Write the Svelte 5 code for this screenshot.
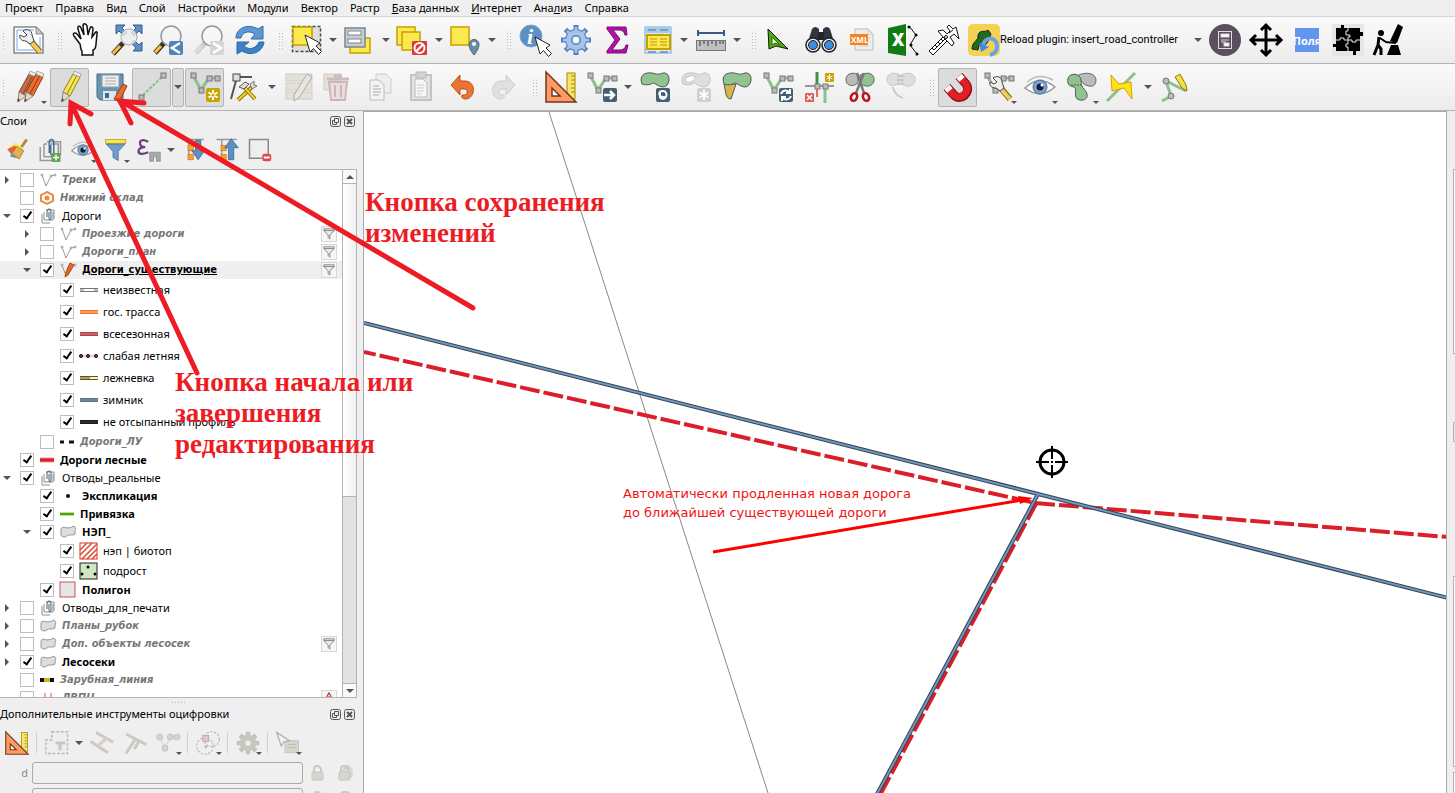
<script lang="ts">
  type Tool = { id: string; label: string; arrow?: boolean; corner?: boolean; on?: boolean; off?: boolean; split?: boolean; text?: string };
  type Row = {
    level: number; kind: string; name: string; open?: boolean; group?: boolean;
    checked?: boolean; look?: string; filter?: boolean; warn?: boolean; active?: boolean;
  };

  const menu = [
    ['', '', 'Проект'], ['', '', 'Правка'], ['', '', 'Вид'], ['', '', 'Слой'],
    ['', '', 'Настройки'], ['', '', 'Модули'], ['', '', 'Вектор'], ['', '', 'Растр'],
    ['', 'Б', 'аза данных'], ['', 'И', 'нтернет'], ['Ана', 'л', 'из'], ['', '', 'Справка'],
  ];

  // shared pieces
  const node = (x: number, y: number) => `<rect x="${x - 2}" y="${y - 2}" width="5" height="5" fill="#bbb" stroke="#777"/>`;
  const vline = `<path d="M4 4L12 19L20 7H28" fill="none" stroke="#8cc08f" stroke-width="3"/>${node(4, 4)}${node(12, 19)}${node(20, 7)}${node(28, 7)}`;
  const badge = (fill: string, inner: string) => `<rect x="17" y="17" width="14" height="14" rx="2" fill="${fill}"/>${inner}`;
  const star = `<path d="M24 19v10M19.500 21.500l9 5M28.500 21.500l-9 5" stroke="#fff" stroke-width="2"/><circle cx="24" cy="24" r="1.500" fill="#c8a400"/>`;
  const cursor = (x: number, y: number) => `<path d="M${x} ${y}l5 17l3.500-3.500l5 6l3-3l-5.500-5.500l4-3z" fill="#fff" stroke="#222"/>`;
  const lens = (fill: string, line: string, h: string) => `<path d="M12 19L3 29" stroke="${line}" stroke-width="5"/><path d="M9 22L3 28.500" stroke="${h}" stroke-width="3"/><circle cx="19" cy="12" r="10" fill="${fill}" stroke="#999" stroke-width="1.500"/>`;
  const pencil = (x: number, fill: string, dark: string) => `<g transform="translate(${x} 0)"><path d="M13 3l7 3L10 25l-7-4z" fill="${fill}" stroke="${dark}"/><path d="M16.500 5L7 23" stroke="${dark}"/><path d="M3 21l7 4l-8 6z" fill="#e6d8bd" stroke="#888"/><path d="M2 27l2 2l-3 2z" fill="#444"/><path d="M13 3l1-3l7 3l-1 3z" fill="#eee" stroke="#aaa"/></g>`;
  const rulerSet = `<rect x="22" y="2" width="8" height="26" fill="#f5e56b" stroke="#a68a00"/><path d="M26 5h4M26 9h4M26 13h4M26 17h4M26 21h4" stroke="#a68a00"/><path d="M1 1V31H31z" fill="#ff9a63" stroke="#6b3a22" stroke-width="1.500"/><path d="M7 17V25H15z" fill="#fff" stroke="#6b3a22" stroke-width="1.500"/>`;
  const blob = `M3 13C0 5 5 1 13 2C18 3 19 4 24 2C30 1 32 9 28 14C25 18 19 15 15 12C11 13 9 15 3 13z`;
  const sq = (x: number, y: number, w: number, h: number) => `<rect x="${x}" y="${y}" width="${w}" height="${h}" fill="#fce94f" stroke="#c4a000" stroke-width="1.500"/>`;
  const eye = `<path d="M1 17Q15 3 31 16Q16 29 1 17z" fill="#fff" stroke="#999" stroke-width="1.500"/><path d="M3 11Q15 1 29 9" fill="none" stroke="#bbb" stroke-width="1.500"/><circle cx="16" cy="16" r="7" fill="#7ba3d0" stroke="#456a99"/><circle cx="16" cy="16" r="3.500" fill="#17202c"/><circle cx="18" cy="14" r="1.500" fill="#fff"/>`;
  const tree = `<path d="M2 2h27M9 2v25M9 14h5M9 26h5" fill="none" stroke="#999" stroke-width="2"/><rect x="8" y="10" width="7" height="7" fill="#f7a334" stroke="#d07c10"/><rect x="8" y="22" width="7" height="7" fill="#f7a334" stroke="#d07c10"/>`;
  const wrench = `<path d="M16 15L27 28" stroke="#8b6d1c" stroke-width="6"/><path d="M18 18L27 28" stroke="#edcf66" stroke-width="4"/><path d="M10 7C14 4 19 6 19 11L21 17L17 20L13 17C8 17 6 14 7 11L11 13L14 11z" fill="#eee" stroke="#444"/>`;
  const clip = (c: string) => `<path d="M3 12v18h17M8 8v17h19V8H17M12 8H8" fill="none" stroke="${c}" stroke-width="2"/><path d="M12 5h18v17h-3" fill="none" stroke="${c}" stroke-width="2"/><path d="M15 20V6q0-4 3-4t3 4v14q0 3-2 3t-2-3V9" fill="none" stroke="#47708f" stroke-width="2"/>`;

  const icons: Record<string, string> = {
    layout: `<path d="M1 3H23L30 10V29H1z" fill="#fff" stroke="#888" stroke-width="1.500"/><path d="M23 3v7h7z" fill="#ccc" stroke="#888"/><path d="M4 6H21M4 6V26H27V13" fill="none" stroke="#a9c4ef" stroke-width="1.500"/>${wrench}`,
    pan: `<path d="M10 20L4 12C2 9 5 8 7 10L11 15L8 5C7 2 10 1 11 4L14 11L13 2C13-1 16-1 17 2L18 11L20 4C21 2 23 3 23 5L22 13L25 9C26 7 28 8 27 10L26 20Q26 25 23 26V31H12V27C10 25 11 23 10 20z" fill="#fff" stroke="#111" stroke-width="1.500"/>`,
    zoomFull: `<path d="M12 19L2 30" stroke="#333" stroke-width="5"/><path d="M9 22L2 29.500" stroke="#fbc02d" stroke-width="3"/><g fill="#5f90c4" stroke="#2f5f94"><path d="M5 1h9l-3 3l5 5l-3 3l-5-5l-3 3z"/><path d="M31 1h-9l3 3l-5 5l3 3l5-5l3 3z"/><path d="M31 27h-9l3-3l-5-5l3-3l5 5l3-3z"/></g><circle cx="18" cy="13" r="8" fill="#eee" fill-opacity="0.800" stroke="#aaa"/>`,
    zoomLast: lens('#f5f5f5', '#333', '#fbc02d') + badge('#4f82b7', '<path d="M28 19L20 24L28 29" fill="none" stroke="#fff" stroke-width="2.500"/>'),
    zoomNext: lens('#f7f7f7', '#ccc', '#ddd') + badge('#d2d6d8', '<path d="M20 19L28 24L20 29" fill="none" stroke="#fff" stroke-width="2.500"/>'),
    refresh: `<path d="M2 14C2 4 14-1 24 5L29 2V15H17L21 10C15 6 8 8 7 14z" fill="#5c97d6" stroke="#2e69a8"/><path d="M30 18C29 28 17 33 8 27L3 30V18H15L10 22C16 27 22 24 25 18z" fill="#3f7fc4" stroke="#2e69a8"/>`,
    select: `<rect x="1.500" y="2.500" width="28" height="25" fill="#dedede" stroke="#444" stroke-width="1.500" stroke-dasharray="3 2"/>${sq(2, 3, 19, 18)}${cursor(14, 11)}`,
    selectForm: `${sq(6, 14, 20, 15)}<rect x="1" y="4" width="20" height="19" fill="#c9ced4" stroke="#7c858f" stroke-width="1.500"/><rect x="4" y="7" width="13" height="4" fill="#fff" stroke="#7c858f"/><rect x="4" y="15" width="13" height="4" fill="#fff" stroke="#7c858f"/>`,
    deselect: `${sq(0, 3, 18, 18)}${sq(5, 8, 18, 18)}<rect x="15" y="17" width="15" height="14" rx="1" fill="#dd3b3b"/><circle cx="22.500" cy="24" r="5" fill="none" stroke="#fff" stroke-width="2"/><path d="M19 27.500L26 20.500" stroke="#fff" stroke-width="2"/>`,
    selectLoc: `${sq(1, 3, 18, 18)}<path d="M24 31C20 26 19 23 19 20.500a5 5 0 0 1 10 0C29 23 28 26 24 31z" fill="#6d8ca3" stroke="#48657a"/><circle cx="24" cy="20" r="2" fill="#fff"/>`,
    identify: `<circle cx="12" cy="12" r="11" fill="#5f90c4" stroke="#7ba6d6"/><text x="8" y="20" font-family="Liberation Serif, serif" font-size="22" font-style="italic" font-weight="700" fill="#fff">i</text>${cursor(16, 13)}`,
    gear: `<g fill="none" stroke="#4f84c4"><path d="M16 1V31M1 16H31M5.500 5.500L26.500 26.500M26.500 5.500L5.500 26.500" stroke-width="5"/><circle cx="16" cy="16" r="8" stroke-width="6"/></g><g fill="none" stroke="#a5c4e8"><path d="M16 3V10M16 22V29M3 16H10M22 16H29M7 7L12 12M20 20L25 25M25 7L20 12M12 20L7 25" stroke-width="2.500"/><circle cx="16" cy="16" r="7.500" stroke-width="5"/></g><circle cx="16" cy="16" r="4" fill="#fff" stroke="#4f84c4"/>`,
    sigma: `<path d="M6 3H25L26 11H24Q23 6 18 6H12L19 15L11 26H19Q24 26 25 21H27L25 29H6V27L14 16L6 5z" fill="#b012a8" stroke="#7d0a78"/>`,
    table: `<rect x="3" y="3" width="26" height="26" fill="#ddebf7" stroke="#7aa5cf"/><rect x="3" y="3" width="26" height="6" fill="#a7cbe8"/><path d="M6 6h8M18 6h8M6 28h8M18 28h8" stroke="#5f90c4" stroke-width="1.500"/><rect x="5" y="11" width="23" height="14" fill="#fce94f" stroke="#c4a000" stroke-width="2"/><path d="M8 15h7M18 15h7M8 18h7M18 18h7M8 21h7M18 21h7" stroke="#b99700"/>`,
    measure: `<path d="M3 9H29M3 6V12M29 6V12" stroke="#3c5a80" stroke-width="2"/><rect x="1.500" y="16.500" width="29" height="10" fill="#bfc0c2" stroke="#777"/><path d="M5 17v5M9 17v3M13 17v5M17 17v3M21 17v5M25 17v3M28 17v3" stroke="#666" stroke-width="1.500"/>`,
    greenArrow: `<path d="M4 5L24 25L12 22L5 25z" fill="#4fae0c" stroke="#111"/><path d="M8 13L16 21L11 19L8 21z" fill="#f4f4f4" stroke="#2c6b05"/>`,
    binoculars: `<path d="M7 5Q10 1 14 5V24H1z" fill="#333440"/><path d="M25 5Q22 1 18 5V24H31z" fill="#333440"/><rect x="13" y="8" width="6" height="8" fill="#22232c"/><circle cx="8" cy="21" r="7" fill="#eee" stroke="#222" stroke-width="1.500"/><circle cx="24" cy="21" r="7" fill="#eee" stroke="#222" stroke-width="1.500"/><circle cx="8" cy="21" r="4.500" fill="#3b8ede" stroke="#222"/><circle cx="24" cy="21" r="4.500" fill="#3b8ede" stroke="#222"/>`,
    xml: `<path d="M9 5H22L27 10V26H9z" fill="#eee" stroke="#bbb"/><path d="M22 5v5h5M12 22h11M19 14h6M19 18h6" fill="none" stroke="#ccc"/><rect x="4" y="10" width="18" height="11" fill="#f5841f"/><text x="5" y="19" font-family="Open Sans, sans-serif" font-size="8" font-weight="700" fill="#fff">XML</text>`,
    excel: `<path d="M1 4L19 0V32L1 29z" fill="#127a12"/><text x="5" y="22" font-family="Open Sans, sans-serif" font-size="17" font-weight="800" fill="#fff">X</text><path d="M22 2L29 11L23 21L30 30" fill="none" stroke="#111"/><circle cx="22" cy="3" r="1.500"/><circle cx="29" cy="11" r="1.500"/><circle cx="24" cy="21" r="1.500"/><circle cx="30" cy="30" r="1.500"/>`,
    caliper: `<path d="M1 27L17 11L21 15L5 31z" fill="#fff" stroke="#111"/><path d="M6 26L17 15M4 24l2 2M7 21l2 2M10 18l2 2M13 15l2 2" stroke="#111"/><path d="M10 7L15 6L19 10L22 7L19 3L21 1L25 5L28 3L31 15L26 10L22 13L26 19L24 22L15 13z" fill="#fff" stroke="#111"/><path d="M21 9l4-3" stroke="#111"/><circle cx="18" cy="13" r="1.500" fill="#fff" stroke="#111"/>`,
    reload: `<rect width="32" height="32" rx="5" fill="#f2d155"/><path d="M4 25C4 17 11 17 10 11C12 5 17 9 20 6L23 10C21 15 20 19 16 22L11 21L10 26z" fill="#1f6b1f" stroke="#222"/><path d="M15 23C15 12 29 12 29 22C29 27 26 30 22 31" fill="none" stroke="#6ba0ea" stroke-width="4"/><path d="M11 19L13 28L21 23z" fill="#4a87dc"/>`,
    form: `<circle cx="16" cy="16" r="16" fill="#5b4f5f"/><g fill="none" stroke="#e0dae2"><rect x="9.500" y="7.500" width="13" height="17"/><rect x="12" y="10" width="8" height="3" fill="#fff"/><path d="M12 16h8M12 18h5"/><rect x="15" y="19" width="5" height="3" fill="#fff"/></g>`,
    move: `<path d="M16 2V30M2 16H30M11 6L16 1L21 6M11 26L16 31L21 26M6 11L1 16L6 21M26 11L31 16L26 21" fill="none" stroke="#000" stroke-width="3"/>`,
    fields: `<rect x="4" y="4" width="24" height="24" fill="#6495ed"/><svg x="4" y="4" width="24" height="24"><text x="12" y="17" text-anchor="middle" font-family="Open Sans, sans-serif" font-size="11" font-weight="700" fill="#fff">Поля</text></svg>`,
    puzzle: `<rect width="32" height="32" fill="#e6e6e6"/><path d="M4 4H9V1H12V4H28V8H31V12H28V27H24V31H21V27H4V23H1V20H4z"/><path d="M16 4V7H14V11H18V13H16V20H14V23H16V27M4 16H8V14H12V16H20V18H24V16H28" fill="none" stroke="#e6e6e6"/>`,
    forge: `<circle cx="8" cy="9" r="3"/><path d="M7 14L13 18L23 19" fill="none" stroke="#000" stroke-width="2"/><path d="M6 13L5 21L8 25V31M5 21L1 31" fill="none" stroke="#000" stroke-width="3"/><path d="M25 0L30 3L24 19L17 17z"/><path d="M18 21H25L28 31H14z"/>`,
    currentEdits: pencil(3, '#c56a4a', '#7f4a36') + pencil(10, '#ea6b2c', '#8f3d12'),
    toggleEdit: pencil(6, '#f3e45a', '#8f8212'),
    save: `<path d="M2 3H28V29H5L2 26z" fill="#6a94b4" stroke="#3f6a8a"/><rect x="7" y="4" width="17" height="12" fill="#eee" stroke="#999"/><path d="M10 7h11M10 10h11M10 13h11" stroke="#aaa"/><rect x="8" y="20" width="13" height="9" fill="#dfe6eb"/><rect x="10" y="22" width="4" height="5" fill="#3f6a8a"/><path d="M28 13L32 15L24 31L19 28z" fill="#ea6b2c" stroke="#8f3d12"/>`,
    digitize: `<path d="M7 24L26 6" stroke="#7cc486" stroke-width="2" stroke-dasharray="3 1.500"/>${node(5, 26)}${node(27, 4)}`,
    vertexNew: vline + badge('#c8a400', star),
    vertexTool: `<path d="M7 6H22M7 6L1 28" stroke="#555" stroke-width="2"/><rect x="3" y="3" width="7" height="7" fill="#ddd" stroke="#444"/><path d="M8 29L22 16" stroke="#8f7205" stroke-width="4"/><path d="M8 29L21 17" stroke="#f0d231" stroke-width="2"/><path d="M13 15L25 28" stroke="#8f7205" stroke-width="4"/><path d="M15 17L25 28" stroke="#f0d231" stroke-width="2"/><path d="M9 16L15 11L19 13L14 18z" fill="#ddd" stroke="#555"/><path d="M20 13L24 10V14L27 15L22 18z" fill="#ddd" stroke="#777"/>`,
    multiEdit: `<g fill="#e3e1d8" stroke="#cfccc0"><rect x="3" y="3" width="26" height="7"/><rect x="3" y="12" width="26" height="7"/><rect x="3" y="21" width="26" height="7"/></g><path d="M24 3L29 6L16 27L11 30V24z" fill="#e8e4e2" stroke="#b3a9a7"/>`,
    trash: `<rect x="0" y="3" width="17" height="16" fill="#e3e1d8" stroke="#cfccc0"/><path d="M3 8H25M10 5H18" stroke="#cdbcbc" stroke-width="3"/><path d="M5 11H23L21 29H7z" fill="#eadede" stroke="#cdb6b6" stroke-width="2"/><path d="M11 14V26M17 14V26" stroke="#cdb6b6" stroke-width="2"/>`,
    copy: `<path d="M11 3H21L26 8V22H11z" fill="#eee" stroke="#ccc"/><path d="M5 9H14L19 14V29H5z" fill="#f3f3f3" stroke="#bbb"/><path d="M8 15h6M8 18h8M8 21h8M8 24h6" stroke="#c4c4c4" stroke-width="1.500"/>`,
    paste: `<rect x="5" y="4" width="20" height="25" fill="#e3e3e0" stroke="#c4c4bf" stroke-width="2"/><rect x="10" y="1" width="10" height="6" fill="#d2d2d2" stroke="#bbb"/><path d="M9 8H17L21 12V26H9z" fill="#f6f6f6" stroke="#bbb"/><path d="M11 14h7M11 17h7M11 20h7M11 23h5" stroke="#ccc"/>`,
    undo: `<path d="M4 14L13 4V10H18C29 10 29 27 19 28C15 28 14 26 15 24C21 25 22 18 17 18H13V24z" fill="#ea7434" stroke="#bd4f14"/>`,
    redo: `<path d="M27 14L18 4V10H13C2 10 2 27 12 28C16 28 17 26 16 24C10 25 9 18 14 18H18V24z" fill="#dfe1df" stroke="#cbcdcb"/>`,
    ruler: rulerSet,
    moveFeature: vline + badge('#3f6075', '<path d="M18 24H28M24 20L28 24L24 28" fill="none" stroke="#fff" stroke-width="2.500"/>'),
    rotate: `<path d="${blob}" fill="#90c390" stroke="#555"/>${badge('#3f6075', '<path d="M21 27C28 31 30 20 24 20C19 20 19 25 24 26M21 21V26H26" fill="none" stroke="#fff" stroke-width="2"/>')}`,
    addRing: `<path d="${blob}" fill="#dedede" stroke="#c4c4c4"/><ellipse cx="10" cy="8" rx="5" ry="3" fill="#fff" stroke="#c4c4c4" transform="rotate(-20 10 8)"/>${badge('#d3d0c5', '<path d="M24 19v10M19.500 21.500l9 5M28.500 21.500l-9 5" stroke="#fff" stroke-width="2"/>')}`,
    reshape: `<path d="M3 13H15L10 28Q6 28 5 23z" fill="#d9b648" stroke="#555"/><path d="${blob}" fill="#90c390" stroke="#555"/>`,
    offset: vline + badge('#3f6075', '<path d="M19 23C21 18 26 19 28 22M29 25C27 30 22 29 20 26M28 18V22H24M20 30V26H24" fill="none" stroke="#fff" stroke-width="2"/>'),
    split: `<path d="M14 1V15" stroke="#3d9150" stroke-width="3"/><path d="M14 15V26" stroke="#e86d59" stroke-width="2"/><path d="M22 15V32" stroke="#8cc08f" stroke-width="3"/><path d="M2 15H31" stroke="#999" stroke-width="2"/>${node(14, 15)}${node(22, 15)}<rect x="22" y="2" width="9" height="9" rx="1" fill="#c8a400"/><path d="M26.500 3v7M23.500 5l6 3M29.500 5l-6 3" stroke="#fff"/><rect x="2" y="22" width="9" height="9" rx="1" fill="#d9605e"/><path d="M4 24l5 5M9 24l-5 5" stroke="#fff" stroke-width="1.500"/>`,
    cut: `<path d="M2 9C2 3 7 1 14 3V12C8 17 2 14 2 9z" fill="#bbb" stroke="#666"/><path d="M16 4C25 0 31 3 30 10C28 17 20 16 16 12z" fill="#90c390" stroke="#666"/><path d="M13 2L20 22M20 2L12 22" stroke="#777" stroke-width="2.500"/><ellipse cx="10" cy="26" rx="3" ry="4" fill="none" stroke="#b8141c" stroke-width="2.500" transform="rotate(25 10 26)"/><ellipse cx="22" cy="26" rx="3" ry="4" fill="none" stroke="#b8141c" stroke-width="2.500" transform="rotate(-25 22 26)"/>`,
    merge: `<path d="M2 9C2 3 7 1 14 3V12C8 17 2 14 2 9z" fill="#dedede" stroke="#c8c8c8"/><path d="M16 4C25 0 31 3 30 10C28 17 20 16 16 12z" fill="#dedede" stroke="#c8c8c8"/><path d="M12 5h7M12 9h7M12 13h7M8 16Q9 24 18 27" fill="none" stroke="#c0c0c0" stroke-width="1.500"/>`,
    magnet: `<path d="M5 16L12 24C18 31 30 22 24 13L17 5" fill="none" stroke="#8c0c12" stroke-width="9"/><path d="M5 16L12 24C18 30 29 21 24 13L17 5" fill="none" stroke="#e01f26" stroke-width="7"/><path d="M5 16L8 19.500M17 5L20 8.500" stroke="#fff" stroke-width="7"/>`,
    snapTools: vline + wrench,
    eye,
    topology: `<path d="M12 5C20 0 31 2 31 9C31 17 24 16 19 13z" fill="#bbb" stroke="#666"/><path d="M3 12C1 4 9 1 14 5C18 9 14 13 19 18C26 26 20 30 15 29C7 28 13 18 9 16C6 15 4 15 3 12z" fill="#90c390" stroke="#555"/><path d="M6 14H16" stroke="#555" stroke-dasharray="2 1"/>`,
    intersect: `<path d="M1 30L29 2" stroke="#8cc08f" stroke-width="3"/><path d="M5 4L13 13L25 11L26 28L18 17L6 20z" fill="#fce21b" stroke="#e09b00"/>`,
    trace: `<path d="M3 30L12 25L7 10L27 20" fill="none" stroke="#8cc08f" stroke-width="3"/><circle cx="7" cy="10" r="3" fill="#bbb" stroke="#777"/><circle cx="12" cy="25" r="3" fill="#bbb" stroke="#777"/><path d="M16 6L21 3L27 14L28 20L23 17z" fill="#f7dc3e" stroke="#8f7a12"/>`,
    style: `<path d="M3 15L14 6L25 15L13 28z" fill="#fce94f"/><path d="M3 15L13 10L20 20L11 25z" fill="#e85b4a"/><path d="M9 18L22 17L17 27L7 25z" fill="#6693cf"/><path d="M29 2L22 12" stroke="#b98a2e" stroke-width="4"/><path d="M16 11L25 17L19 28L9 21z" fill="#e0b050" stroke="#a77420"/>`,
    addGroup: `${clip('#999')}<rect x="18" y="20" width="12" height="12" rx="2" fill="#5fa34f"/><path d="M24 22v8M20 26h8" stroke="#fff" stroke-width="2"/>`,
    funnel: `<rect x="2" y="2" width="27" height="5" fill="#fce94f" stroke="#b99700"/><path d="M3 8H28L19 18V30L12 26V18z" fill="#6e9ec9" stroke="#3f6a94"/>`,
    epsilon: `<path d="M15 5Q4 0 4 7Q4 12 11 12Q2 12 2 18Q3 24 15 19" fill="none" stroke="#6b3e78" stroke-width="3"/><path d="M17 19H31V31H26V25H22V31H17z" fill="#aaa" stroke="#888"/>`,
    expand: `${tree}<path d="M18 3H25V17H30L21.500 29L13 17H18z" fill="#5f90c4" stroke="#2f5f94"/>`,
    collapse: `${tree}<path d="M18 29H25V13H31L21.500 1L13 13H18z" fill="#5f90c4" stroke="#2f5f94"/>`,
    remove: `<rect x="2" y="2" width="25" height="25" fill="#eee" stroke="#888" stroke-width="2"/><rect x="19" y="21" width="12" height="10" rx="3" fill="#e0464e"/><path d="M21 26h8" stroke="#fff" stroke-width="2.500"/>`,
    construct: `<path d="M9 1H30V30H1V12H9z" fill="#eee" stroke="#bbb" stroke-width="2" stroke-dasharray="4 2"/><path d="M14 14H27V18H22V26H18V18H14z" fill="#c9c6c0"/>`,
    parallel: `<path d="M1 14L24 29M8 2L31 15" stroke="#ccc8c2" stroke-width="4"/><path d="M22 10L10 20" stroke="#d9cfc8" stroke-width="4"/>`,
    perpendicular: `<path d="M4 4L31 18M17 10L4 30M21 14L15 24" stroke="#ccc8c2" stroke-width="4"/>`,
    angles: `<path d="M5 7L12 23L20 7H28" fill="none" stroke="#ddd" stroke-width="2"/><g fill="#d5d5d2" stroke="#b9b9b5"><circle cx="5" cy="8" r="4"/><circle cx="19" cy="8" r="4"/><circle cx="28" cy="8" r="4"/><circle cx="12" cy="23" r="4"/></g>`,
    circles: `<g fill="none" stroke="#b5b5b5" stroke-width="1.500" stroke-dasharray="3 2"><circle cx="12" cy="20" r="11"/><circle cx="21" cy="11" r="10"/></g><rect x="9" y="6" width="8" height="8" fill="#d9c9c5" stroke="#b5a5a1"/><circle cx="13" cy="21" r="2" fill="#bbb"/>`,
    gearGrey: `<path d="M16 1V31M1 16H31M5.500 5.500L26.500 26.500M26.500 5.500L5.500 26.500" stroke="#c4c3ba" stroke-width="6"/><circle cx="16" cy="16" r="11" fill="#c9c8bf"/><circle cx="16" cy="16" r="3.500" fill="#eee"/>`,
    cursorPanel: `<rect x="12" y="13" width="18" height="16" fill="#d8d6cc" stroke="#c0beb4"/><path d="M15 18h12M15 22h12" stroke="#b9b7ad"/><path d="M1 2L18 13L11 14L7 20z" fill="#f2f2f2" stroke="#aaa" stroke-width="1.500"/>`,
  };

  const mainTools: Tool[][] = [
    [{ id: 'layout', label: 'Менеджер макетов' }],
    [
      { id: 'pan', label: 'Прокрутка карты' }, { id: 'zoomFull', label: 'Полный охват' },
      { id: 'zoomLast', label: 'Предыдущий охват' }, { id: 'zoomNext', label: 'Следующий охват', off: true },
      { id: 'refresh', label: 'Обновить' },
    ],
    [
      { id: 'select', label: 'Выбрать объекты', arrow: true }, { id: 'selectForm', label: 'Выбрать по значению', arrow: true },
      { id: 'deselect', label: 'Снять выделение', arrow: true }, { id: 'selectLoc', label: 'Выбрать по положению', arrow: true },
    ],
    [
      { id: 'identify', label: 'Определить объекты' }, { id: 'gear', label: 'Инструменты анализа' },
      { id: 'sigma', label: 'Статистика' }, { id: 'table', label: 'Таблица атрибутов', arrow: true },
      { id: 'measure', label: 'Измерить', arrow: true },
    ],
    [
      { id: 'greenArrow', label: 'Стрелка' }, { id: 'binoculars', label: 'Поиск' }, { id: 'xml', label: 'XML' },
      { id: 'excel', label: 'Excel' }, { id: 'caliper', label: 'Штангенциркуль' },
      { id: 'reload', label: 'Reload plugin', text: 'Reload plugin: insert_road_controller', arrow: true },
      { id: 'form', label: 'Форма' }, { id: 'move', label: 'Переместить' }, { id: 'fields', label: 'Поля' },
      { id: 'puzzle', label: 'Модули' }, { id: 'forge', label: 'Обработка' },
    ],
  ];

  const editTools: Tool[][] = [
    [
      { id: 'currentEdits', label: 'Текущие правки', corner: true }, { id: 'toggleEdit', label: 'Режим редактирования', on: true },
      { id: 'save', label: 'Сохранить правки' }, { id: 'digitize', label: 'Оцифровка', on: true, arrow: true, split: true },
      { id: 'vertexNew', label: 'Добавить линию', on: true }, { id: 'vertexTool', label: 'Редактирование вершин', arrow: true },
      { id: 'multiEdit', label: 'Изменить атрибуты', off: true }, { id: 'trash', label: 'Удалить', off: true },
      { id: 'copy', label: 'Копировать', off: true }, { id: 'paste', label: 'Вставить', off: true },
      { id: 'undo', label: 'Отменить' }, { id: 'redo', label: 'Повторить', off: true },
    ],
    [
      { id: 'ruler', label: 'Расширенная оцифровка' }, { id: 'moveFeature', label: 'Переместить объект', arrow: true },
      { id: 'rotate', label: 'Повернуть' }, { id: 'addRing', label: 'Добавить кольцо', off: true },
      { id: 'reshape', label: 'Изменить контур' }, { id: 'offset', label: 'Параллельная кривая' },
      { id: 'split', label: 'Обрезать или продлить' }, { id: 'cut', label: 'Разбить объекты' },
      { id: 'merge', label: 'Объединить объекты', off: true },
    ],
    [
      { id: 'magnet', label: 'Прилипание', on: true }, { id: 'snapTools', label: 'Настройка прилипания', corner: true },
      { id: 'eye', label: 'Видимость', corner: true }, { id: 'topology', label: 'Топология', corner: true },
      { id: 'intersect', label: 'Пересечения', arrow: true }, { id: 'trace', label: 'Трассировка' },
    ],
  ];

  const layerTools: Tool[] = [
    { id: 'style', label: 'Стили' }, { id: 'addGroup', label: 'Добавить группу' },
    { id: 'eye', label: 'Темы карты', corner: true }, { id: 'funnel', label: 'Фильтр', corner: true },
    { id: 'epsilon', label: 'Фильтр по выражению', arrow: true }, { id: 'expand', label: 'Развернуть все' },
    { id: 'collapse', label: 'Свернуть все' }, { id: 'remove', label: 'Удалить слой' },
  ];

  const cadTools: Tool[][] = [
    [{ id: 'ruler', label: 'Включить инструменты' }],
    [
      { id: 'construct', label: 'Режим построения', arrow: true, off: true }, { id: 'parallel', label: 'Параллельно', off: true },
      { id: 'perpendicular', label: 'Перпендикулярно', off: true }, { id: 'angles', label: 'Углы', corner: true, off: true },
    ],
    [{ id: 'circles', label: 'Окружности', corner: true, off: true }],
    [{ id: 'gearGrey', label: 'Настройки', corner: true, off: true }],
    [{ id: 'cursorPanel', label: 'Плавающая панель', corner: true, off: true }],
  ];

  let rows: Row[] = $state([
    { level: 0, kind: 'vector', name: 'Треки', open: false, look: 'dim' },
    { level: 0, kind: 'hexagon', name: 'Нижний склад', look: 'dim' },
    { level: 0, kind: 'group', name: 'Дороги', open: true, checked: true },
    { level: 1, kind: 'vector', name: 'Проезжие дороги', open: false, look: 'dim', filter: true },
    { level: 1, kind: 'vector', name: 'Дороги_план', open: false, look: 'dim', filter: true },
    { level: 1, kind: 'edit', name: 'Дороги_существующие', open: true, checked: true, look: 'current', filter: true, active: true },
    { level: 2, kind: 'unknown', name: 'неизвестная', checked: true, look: 'tall' },
    { level: 2, kind: 'state', name: 'гос. трасса', checked: true, look: 'tall' },
    { level: 2, kind: 'allseason', name: 'всесезонная', checked: true, look: 'tall' },
    { level: 2, kind: 'summer', name: 'слабая летняя', checked: true, look: 'tall' },
    { level: 2, kind: 'plank', name: 'лежневка', checked: true, look: 'tall' },
    { level: 2, kind: 'winter', name: 'зимник', checked: true, look: 'tall' },
    { level: 2, kind: 'unfilled', name: 'не отсыпанный профиль', checked: true, look: 'tall' },
    { level: 1, kind: 'dots', name: 'Дороги_ЛУ', look: 'dim' },
    { level: 0, kind: 'redline', name: 'Дороги лесные', checked: true, look: 'bold' },
    { level: 0, kind: 'group', name: 'Отводы_реальные', open: true, checked: true },
    { level: 1, kind: 'point', name: 'Экспликация', checked: true, look: 'bold' },
    { level: 1, kind: 'greenline', name: 'Привязка', checked: true, look: 'bold' },
    { level: 1, kind: 'polygon', name: 'НЭП_', open: true, checked: true, look: 'bold' },
    { level: 2, kind: 'hatch', name: 'нэп | биотоп', checked: true, look: 'medium' },
    { level: 2, kind: 'growth', name: 'подрост', checked: true, look: 'medium' },
    { level: 1, kind: 'square', name: 'Полигон', checked: true, look: 'bold' },
    { level: 0, kind: 'group', name: 'Отводы_для_печати', open: false },
    { level: 0, kind: 'polygon', name: 'Планы_рубок', open: false, look: 'dim' },
    { level: 0, kind: 'polygon', name: 'Доп. объекты лесосек', open: false, look: 'dim', filter: true },
    { level: 0, kind: 'polygon', name: 'Лесосеки', open: false, checked: true, look: 'bold' },
    { level: 0, kind: 'cutline', name: 'Зарубная_линия', look: 'dim' },
    { level: 0, kind: 'lvpc', name: 'ЛВПЦ', look: 'dim', warn: true },
  ]);

  const vee = `<path d="M2 3L6 14L11 4L15 3" fill="none" stroke="#999"/><g fill="#fff" stroke="#999"><circle cx="2" cy="3" r="1"/><circle cx="11" cy="4" r="1"/><circle cx="15" cy="3" r="1"/></g>`;
  const road = (edge: string, mid: string) => `<path d="M0 8H18" stroke="${edge}" stroke-width="4"/><path d="M0 8H18" stroke="${mid}" stroke-width="2"/>`;
  const symbols: Record<string, string> = {
    vector: vee,
    hexagon: `<path d="M7 2L13 5V11L7 14L1 11V5z" fill="#fff" stroke="#f08a40" stroke-width="2"/><circle cx="7" cy="8" r="2.500" fill="#f08a40"/>`,
    group: `<path d="M2 6v9h8M4 4v8h9V4M6 2h8v9" fill="none" stroke="#8a9095"/><path d="M7 9V3q0-2 2-2t2 2v7q0 2-1 2t-1-2V4" fill="none" stroke="#3f5d70"/>`,
    edit: `${vee}<path d="M10 1L14 3L8 13L5 15L6 10z" fill="#e8662a" stroke="#a8451a"/>`,
    unknown: `${road('#777', '#fff')}<path d="M0 8H4M14 8H18" stroke="#bbb" stroke-width="2"/>`,
    state: road('#f2703a', '#ffa04d'),
    allseason: road('#7a5a5a', '#ff4a55'),
    summer: `<path d="M0 8H18" stroke="#ddd" stroke-width="3"/><g fill="#d51c24" stroke="#111"><circle cx="1" cy="8" r="1.500"/><circle cx="8" cy="8" r="1.500"/><circle cx="16" cy="8" r="1.500"/></g>`,
    plank: `${road('#5a5433', '#a8a25a')}<path d="M10 8H18" stroke="#fff69a" stroke-width="2"/>`,
    winter: road('#66727d', '#6488ac'),
    unfilled: road('#1b1b1b', '#2a2a2a'),
    dots: `<path d="M0 8H4M9 8H14" stroke="#111" stroke-width="3"/>`,
    redline: `<path d="M0 8H14" stroke="#f08a90" stroke-width="5"/><path d="M0 8H14" stroke="#dc1e2a" stroke-width="3"/>`,
    point: `<circle cx="8" cy="8" r="2" fill="#111"/>`,
    greenline: `<path d="M0 8H14" stroke="#bfe86a" stroke-width="4"/><path d="M0 8H14" stroke="#4f9a32" stroke-width="2"/>`,
    polygon: `<path d="M1 5Q2 2 7 4Q11 4 14 2Q17 4 15 7Q16 11 13 11Q8 10 5 13Q0 13 1 9z" fill="#ddd" stroke="#999"/>`,
    hatch: `<rect x="0" y="0" width="17" height="16" fill="#fff" stroke="#dd3322"/><path d="M0 7L7 0M0 12L12 0M2 16L17 1M7 16L17 6M12 16L17 11" stroke="#e0452f" stroke-width="1.500"/>`,
    growth: `<rect x="0" y="0" width="17" height="16" fill="#cfe8c0" stroke="#222"/><circle cx="8" cy="4" r="1.500"/><circle cx="2" cy="11" r="1.500"/><circle cx="15" cy="11" r="1.500"/>`,
    square: `<rect x="0" y="0" width="15" height="15" fill="#e6e6e6" stroke="#c8525a"/>`,
    cutline: `<path d="M0 8H14" stroke="#111" stroke-width="4"/><path d="M4 8H10" stroke="#c8b820" stroke-width="4"/>`,
    lvpc: `<path d="M5 3V16M11 3V16" stroke="#f0a8a0" stroke-width="2"/>`,
  };
  const narrow = ['hexagon', 'dots', 'redline', 'greenline', 'cutline'];

  let distance = $state('');
  let angle = $state('');
</script>

{#snippet caret()}
  <svg class="caret" width="8" height="4" viewBox="0 0 8 4"><path d="M0 0H8L4 4z" fill="#555" /></svg>
{/snippet}

{#snippet toolButton(t: Tool)}
  <div class="tool" class:split={t.split}>
    <button class="tool-btn" class:on={t.on} class:wide={t.text} aria-label={t.label} disabled={t.off}>
      <svg class="glyph" viewBox="0 0 32 32">{@html icons[t.id]}</svg>
      {#if t.text}<span class="caption">{t.text}</span>{/if}
      {#if t.corner}<span class="corner">{@render caret()}</span>{/if}
    </button>
    {#if t.arrow}
      <button class="drop" class:on={t.split} aria-label="{t.label}: меню">{@render caret()}</button>
    {/if}
  </div>
{/snippet}

{#snippet dockTitle(name: string)}
  <header class="dock-title">
    <h2>{name}</h2>
    <button aria-label="Открепить"><svg viewBox="0 0 11 11"><rect x="0.500" y="0.500" width="10" height="10" rx="2" /><path d="M4.500 2.500h4v4h-4zM4 4.500H2.500v4h4V7" /></svg></button>
    <button aria-label="Закрыть"><svg viewBox="0 0 11 11"><rect x="0.500" y="0.500" width="10" height="10" rx="2" /><path d="M3 3l5 5M8 3l-5 5" stroke-width="2" /></svg></button>
  </header>
{/snippet}

{#snippet lockIcon(double: boolean)}
  <svg class="lock" viewBox="0 0 16 18">
    {#if double}<path d="M8 6V4q0-2 2-2t3 2v2" fill="none" stroke="#ccc" stroke-width="2" /><rect x="6" y="5" width="9" height="8" rx="1" fill="#ddddd6" stroke="#ccc" />{/if}
    <path d="M4 8V5q0-3 3-3t4 3v3" fill="none" stroke="#c9c9c4" stroke-width="2" />
    <rect x="2" y="8" width="11" height="8" rx="1" fill="#d6d6ce" stroke="#c4c4bc" />
  </svg>
{/snippet}

<div class="window">
  <nav class="menubar">
    {#each menu as [before, key, after]}
      <a href="#menu">{before}{#if key}<u>{key}</u>{/if}{after}</a>
    {/each}
  </nav>

  {#each [mainTools, editTools] as bar}
    <div class="toolbar">
      {#each bar as group}
        <div class="grip"></div>
        {#each group as t}{@render toolButton(t)}{/each}
      {/each}
    </div>
  {/each}

  <div class="work">
    <aside class="docks">
      <!-- Layers -->
      {@render dockTitle('Слои')}
      <div class="dock-tools">
        {#each layerTools as t}{@render toolButton(t)}{/each}
      </div>
      <div class="tree">
        <div class="rows">
          {#each rows as row, i}
            <div class="row level{row.level} {row.look ?? ''}" class:active={row.active}>
              <span class="twisty">
                {#if row.open === true}
                  <svg width="8" height="8" viewBox="0 0 8 8"><path d="M0 2H8L4 6z" fill="#555" /></svg>
                {:else if row.open === false}
                  <svg width="8" height="8" viewBox="0 0 8 8"><path d="M2 0V8L6 4z" fill="#555" /></svg>
                {/if}
              </span>
              <input type="checkbox" id="layer-{i}" bind:checked={row.checked} />
              <svg class="symbol" class:narrow={narrow.includes(row.kind)} viewBox="0 0 {row.level === 2 ? 19 : narrow.includes(row.kind) ? 14 : 16} 16">{@html symbols[row.kind]}</svg>
              <label for="layer-{i}">{row.name}</label>
              {#if row.filter}
                <button class="mark" aria-label="Фильтр слоя"><svg viewBox="0 0 14 14"><path d="M1 1H13V3L8 8V13L6 11V8L1 3z" fill="#eee" stroke="#777" /><path d="M1 3H13" stroke="#777" /></svg></button>
              {:else if row.warn}
                <button class="mark" aria-label="Предупреждение"><svg viewBox="0 0 14 14"><path d="M7 1L14 13H0z" fill="#fff" stroke="#c8454a" stroke-width="1.500" /><path d="M7 5v4" stroke="#c8454a" stroke-width="2" /></svg></button>
              {/if}
            </div>
          {/each}
        </div>
        <div class="scroll">
          <button aria-label="Вверх"><svg width="8" height="4" viewBox="0 0 8 4"><path d="M0 4H8L4 0z" fill="#555" /></svg></button>
          <div class="thumb"></div>
          <div class="track"></div>
          <button aria-label="Вниз">{@render caret()}</button>
        </div>
      </div>

      <div class="splitter"></div>

      <!-- Advanced digitizing -->
      {@render dockTitle('Дополнительные инструменты оцифровки')}
      <div class="dock-tools cad">
        {#each cadTools as group, i}
          {#if i}<div class="sep"></div>{/if}
          {#each group as t}{@render toolButton(t)}{/each}
        {/each}
      </div>
      <div class="fields">
        <div class="field"><label for="cad-d">d</label><input id="cad-d" type="text" bind:value={distance} />{@render lockIcon(false)}{@render lockIcon(true)}</div>
        <div class="field"><label for="cad-a">a</label><input id="cad-a" type="text" bind:value={angle} />{@render lockIcon(false)}{@render lockIcon(true)}</div>
      </div>
    </aside>

    <div class="gutter"></div>

    <main class="canvas">
      <svg class="map">
        <g transform="translate(-364 -112)" fill="none">
          <path d="M549 112L768 793" stroke="#888" />
          <path d="M364 352L1035 503" stroke="#dc1e2a" stroke-width="4" stroke-dasharray="20 4" stroke-dashoffset="8" />
          <path d="M1035 503L1460 538" stroke="#dc1e2a" stroke-width="4" stroke-dasharray="20 4" />
          <path d="M1037 502L880 795" stroke="#dc1e2a" stroke-width="4" stroke-dasharray="20 4" />
          <path d="M1038 494L876 796" stroke="#39424c" stroke-width="4" />
          <path d="M364 323L1038 494L1460 601" stroke="#39424c" stroke-width="4" />
          <path d="M1038 494L876 796M364 323L1038 494L1460 601" stroke="#6d97c4" stroke-width="2" />
          <path d="M713 552L1022 500" stroke="#ff0000" stroke-width="3" />
          <path d="M1018 496L1033 498L1020 504z" fill="#ff0000" />
          <circle cx="1052" cy="462" r="12" stroke="#000" stroke-width="3" />
          <path d="M1052 446V459M1052 465V478M1036 462H1049M1055 462H1068M1051 462H1053" stroke="#000" stroke-width="2" />
          <g class="note" fill="#f01414">
            <text x="623" y="498">Автоматически продленная новая дорога</text>
            <text x="623" y="517">до ближайшей существующей дороги</text>
          </g>
        </g>
      </svg>
    </main>

    <div class="edge">
      <div class="pane top"></div>
      <div class="pane mid"></div>
      <div class="pane low"></div>
      <div class="pane last"></div>
    </div>
  </div>

  <!-- Callouts drawn over the window -->
  <svg class="callouts">
    <g fill="none" stroke="#ed1c24" stroke-width="5" stroke-linecap="round">
      <path d="M197 373L71 103M70 124L71 103L91 114" />
      <path d="M473 308L121 101M131 123L120 101L144 103" />
    </g>
    <g class="callout-text">
      <text x="365" y="211">Кнопка сохранения</text>
      <text x="365" y="242">изменений</text>
      <text x="175" y="391">Кнопка начала или</text>
      <text x="175" y="422">завершения</text>
      <text x="175" y="453">редактирования</text>
    </g>
  </svg>
</div>

<style>
  :global(body) { margin: 0; overflow: hidden; }

  .window {
    position: relative;
    display: flex;
    flex-direction: column;
    height: 100vh;
    background: #efefef;
    color: #000;
    font: 11px/16px 'Noto Sans', 'Open Sans', sans-serif;
    overflow: hidden;
  }
  button, input {
    margin: 0;
    padding: 0;
    border: 0;
    background: none;
    font: inherit;
    color: inherit;
    box-sizing: border-box;
  }

  /* Menu */
  .menubar {
    display: flex;
    gap: 12px;
    height: 16px;
    padding-left: 5px;
    border-bottom: 1px solid #d4d4d4;
    white-space: nowrap;
  }
  .menubar a { color: inherit; text-decoration: none; }

  /* Toolbars */
  .toolbar {
    display: flex;
    align-items: center;
    height: 46px;
    background: linear-gradient(#fafafa, #ececec);
    border-bottom: 1px solid #b4b4b4;
    white-space: nowrap;
  }
  .grip {
    flex: none;
    width: 16px;
    height: 18px;
    background: repeating-linear-gradient(#f4f4f4 0 2px, transparent 2px 3px), repeating-linear-gradient(90deg, #bbb 0 1px, transparent 1px 3px);
    background-clip: content-box;
    box-sizing: border-box;
    padding: 0 3px 0 8px;
  }
  .grip:first-child { width: 8px; padding: 0 2px 0 1px; }
  .tool { flex: none; display: flex; align-items: center; }
  .tool-btn {
    position: relative;
    display: flex;
    align-items: center;
    justify-content: center;
    min-width: 39px;
    height: 39px;
    margin: 0 1px;
    border: 1px solid transparent;
    border-radius: 2px;
  }
  .tool-btn.on, .drop.on { background: #dcdcdc; border: 1px solid #b4b4b4; border-radius: 2px; }
  .tool-btn.wide { justify-content: flex-start; min-width: 226px; padding-left: 2px; }
  .caption { font-family: Roboto, sans-serif; }
  .glyph { flex: none; width: 32px; height: 32px; overflow: visible; }
  .drop { width: 12px; height: 39px; }
  .caret { display: block; margin: 0 auto; }
  .corner { position: absolute; right: 0; bottom: 2px; }
  .corner .caret { width: 6px; height: 3px; }

  /* Docks */
  .work { flex: 1; display: flex; min-height: 0; }
  .docks { flex: none; display: flex; flex-direction: column; width: 357px; min-height: 0; }
  .dock-title { flex: none; display: flex; align-items: center; gap: 3px; height: 20px; padding-right: 2px; }
  .dock-title h2 { flex: 1; margin: 0; font-size: 11px; font-weight: 400; white-space: nowrap; }
  .dock-title button, .dock-title svg { display: block; width: 11px; height: 11px; }
  .dock-title svg { fill: none; stroke: #555; }
  .dock-tools { flex: none; display: flex; align-items: center; height: 38px; }
  .dock-tools .tool-btn { min-width: 31px; height: 31px; }
  .dock-tools .glyph { width: 24px; height: 24px; }
  .dock-tools .drop { height: 31px; }
  .cad { height: 37px; }
  .sep { width: 1px; height: 20px; margin: 0 3px; background: #d0d0d0; }

  .tree { flex: 1; display: flex; min-height: 0; border: 1px solid #b4b4b4; border-left: 0; background: #fff; }
  .rows { flex: 1; overflow: hidden; padding-top: 1px; }
  .row { display: flex; align-items: center; height: 18px; white-space: nowrap; }
  .row.tall { height: 22px; }
  .row.medium { height: 20px; }
  .row.active { background: #efefef; }
  .level1 { padding-left: 20px; }
  .level2 { padding-left: 40px; }
  .twisty { flex: none; width: 17px; padding-left: 3px; line-height: 0; }
  .row input {
    appearance: none;
    position: relative;
    flex: none;
    width: 14px;
    height: 14px;
    margin-right: 6px;
    border: 1px solid #bdbdbd;
    background: #fff;
  }
  .row input:checked::after {
    content: '';
    display: block;
    width: 3px;
    height: 7px;
    margin: 0 0 0 4px;
    border: solid #000;
    border-width: 0 2px 2px 0;
    transform: rotate(35deg);
  }
  .symbol { flex: none; width: 16px; height: 16px; margin-right: 6px; overflow: visible; }
  .symbol.narrow { width: 14px; }
  .level2 .symbol { width: 19px; margin-right: 4px; }
  .row label { flex: 1; }
  .dim label { color: #777; font-family: 'DejaVu Sans Condensed', 'DejaVu Sans', sans-serif; font-weight: 700; font-style: italic; }
  .bold label { font-weight: 700; }
  .current label { font-family: 'DejaVu Sans Condensed', 'DejaVu Sans', sans-serif; font-weight: 700; text-decoration: underline; }
  .mark { flex: none; width: 16px; height: 16px; margin-right: 5px; border: 1px solid #d8d8d8; background: #f6f6f6; }
  .mark svg { display: block; width: 12px; height: 12px; margin: auto; }

  .scroll { flex: none; display: flex; flex-direction: column; width: 13px; border-left: 1px solid #b4b4b4; background: #e2e2e2; }
  .scroll button { height: 13px; background: #fafafa; display: flex; align-items: center; }
  .scroll button svg { margin: auto; }
  .thumb { flex: 313; border: solid #b4b4b4; border-width: 1px 0; background: linear-gradient(90deg, #fff, #f0f0f0); }
  .track { flex: 186; border-bottom: 1px solid #b4b4b4; }

  .splitter { flex: none; height: 6px; background: radial-gradient(circle, #b4b4b4 1px, transparent 1px) 0 0 / 3px 3px; background-clip: content-box; box-sizing: border-box; padding: 2px 170px 1px; }

  .fields { flex: none; height: 31px; overflow: hidden; padding-top: 1px; }
  .field { display: flex; align-items: center; height: 22px; margin-bottom: 4px; }
  .field label { width: 28px; text-align: right; color: #888; }
  .field input { flex: 1; height: 22px; margin: 0 7px 0 4px; padding: 0 4px; border: 1px solid #aaa; border-radius: 3px; background: #efefef; }
  .lock { width: 16px; height: 18px; margin-right: 11px; }
  .lock:last-child { margin-right: 4px; }

  .gutter { flex: none; width: 6px; }

  /* Map */
  .canvas { flex: 1; min-width: 0; border: 1px solid #a8a8a8; border-bottom: 0; background: #fff; }
  .map { display: block; width: 100%; height: 100%; }
  .note { font: 13px 'DejaVu Sans', sans-serif; }

  .edge { flex: none; display: flex; flex-direction: column; width: 2px; padding: 58px 0 0 6px; }
  .pane { border: 1px solid #b4b4b4; border-right: 0; background: #fff; box-sizing: border-box; }
  .top { height: 185px; }
  .mid { height: 20px; margin-top: 68px; background: #e4e4e4; }
  .low { height: 191px; margin-top: 134px; }
  .last { flex: 1; margin-top: 5px; border-bottom: 0; }

  .callouts { position: absolute; inset: 0; width: 100%; height: 100%; pointer-events: none; }
  .callout-text { fill: #ed1c24; font: 700 27px 'Liberation Serif', serif; }
</style>
